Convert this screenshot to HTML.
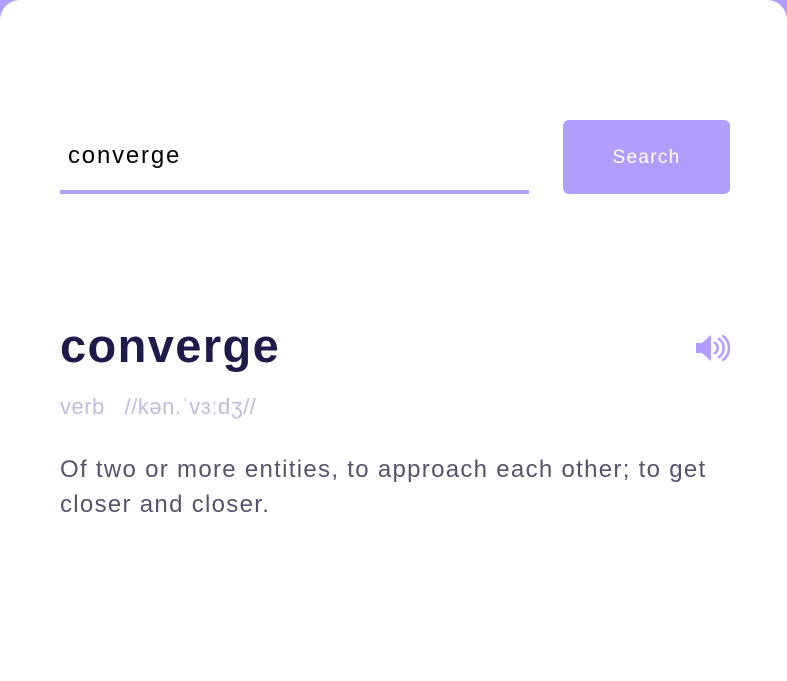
<!DOCTYPE html>
<html><head><style>
html,body{margin:0;padding:0;width:787px;height:681px;overflow:hidden;background:#b19dfc;font-family:"Liberation Sans",sans-serif;}
.card{position:absolute;left:0;top:0;width:787px;height:681px;background:#fff;border-radius:20px 20px 0 0;}
.inp{position:absolute;left:60px;top:139px;width:469px;height:55px;border-bottom:4px solid #b19dfc;box-sizing:border-box;}
.inp span{position:absolute;left:8px;top:3px;font-size:24px;letter-spacing:1.8px;color:#000;}
.btn{position:absolute;left:563px;top:120px;width:167px;height:74px;background:#b19dfc;border-radius:6px;color:#fff;font-size:19px;letter-spacing:1.3px;text-align:center;line-height:76px;}
h1{position:absolute;left:60px;top:318px;margin:0;font-size:47px;font-weight:bold;color:#1e1b4a;letter-spacing:1.4px;}
.ph{position:absolute;left:60px;top:394px;font-size:22px;letter-spacing:0.5px;color:#c0bcdc;}
.desc{position:absolute;left:60px;top:452px;width:680px;font-size:24px;letter-spacing:1.3px;line-height:35px;color:#55546e;}
svg{position:absolute;left:696px;top:334px;}
</style></head><body>
<div class="card">
<div class="inp"><span>converge</span></div>
<div class="btn">Search</div>
<h1>converge</h1>
<div class="ph">verb &nbsp;&nbsp;//kən.ˈvɜːdʒ//</div>
<div class="desc">Of two or more entities, to approach each other; to get closer and closer.</div>
<svg width="36" height="28" viewBox="0 0 36 28"><path d="M0 9h6l9-8v26l-9-8H0z" fill="#b19dfc"/><path d="M19 9a6 6 0 0 1 0 10M23 5a11 11 0 0 1 0 18M27 2a15 15 0 0 1 0 24" stroke="#b19dfc" stroke-width="2.5" fill="none" stroke-linecap="round"/></svg>
</div>
</body></html>
